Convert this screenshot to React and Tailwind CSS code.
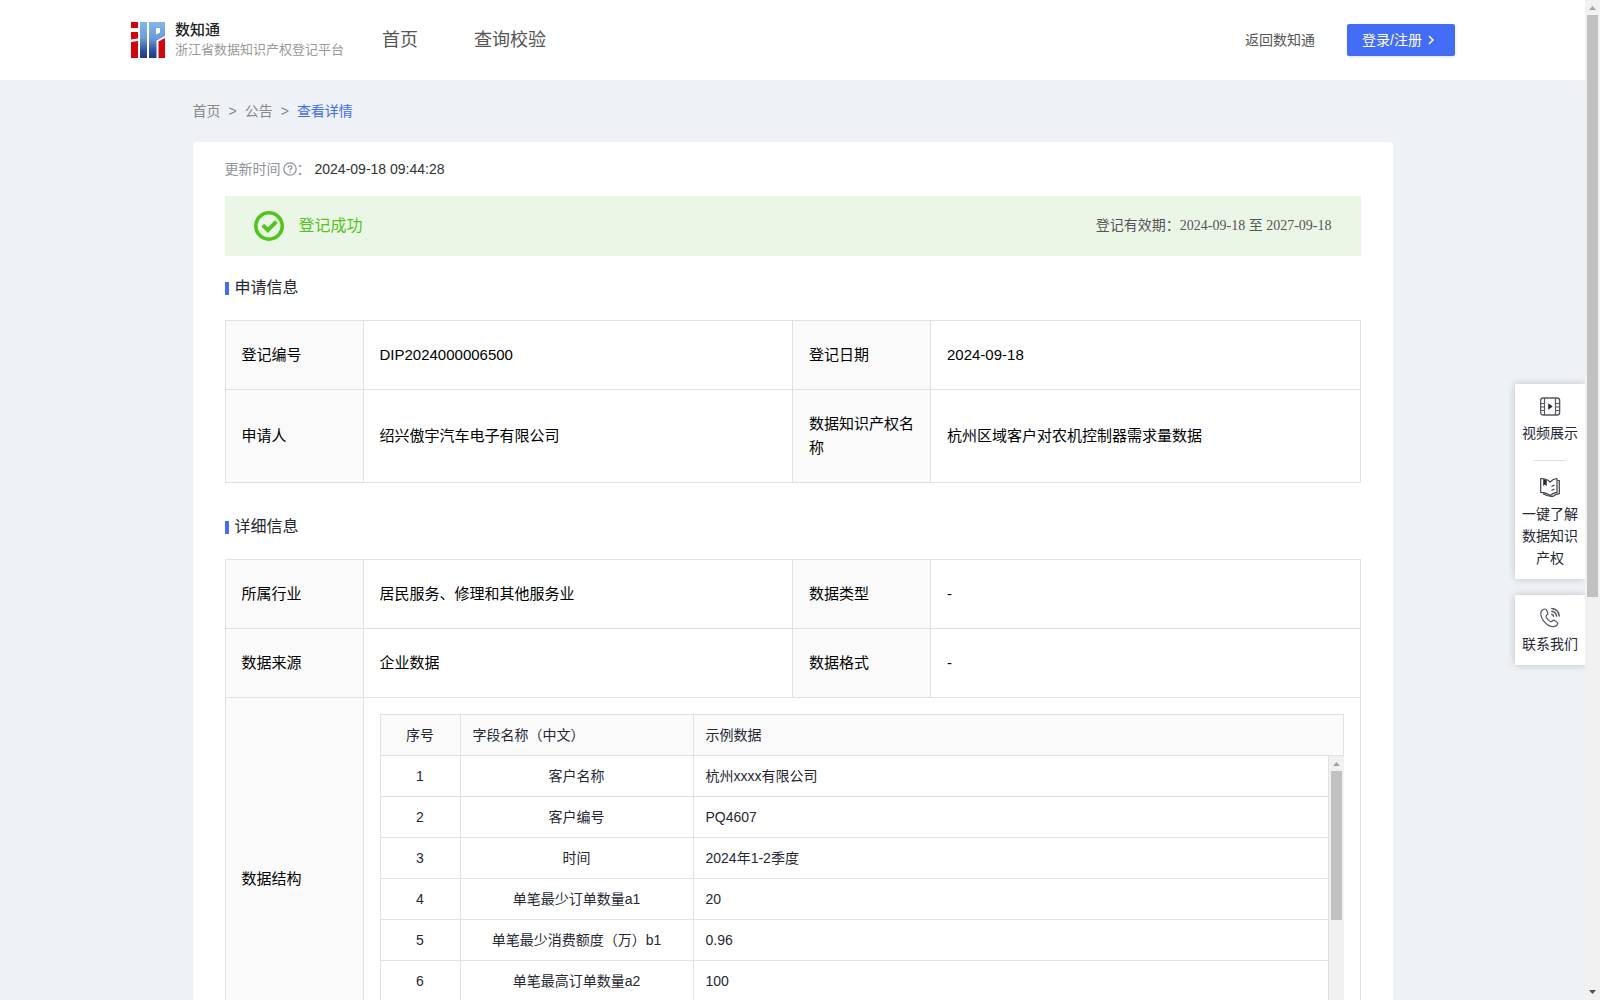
import React from "react";

const LINE = "border-[#e1e1e1]";

function Logo() {
  return (
    <svg width="34" height="36" viewBox="0 0 34 36" aria-hidden="true">
      <defs>
        <linearGradient id="blue" x1="0" y1="0" x2="0" y2="36" gradientUnits="userSpaceOnUse">
          <stop offset="0" stopColor="#84b6ea" />
          <stop offset="0.45" stopColor="#6d9ad8" />
          <stop offset="0.8" stopColor="#30509f" />
          <stop offset="1" stopColor="#27357f" />
        </linearGradient>
      </defs>
      <path fill="#d0070f" d="M0 0h7v6H0zM0 10h7v6.500l-7 1zM0 20l7-1v17H0z" />
      <path fill="url(#blue)" d="M9 0h7v36H9z" />
      <path fill="url(#blue)" fillRule="evenodd" d="M18 0h16v14l-8.500 4.500V36H18zM25 6v6.500l4-2V6z" />
      <path fill="#d0070f" d="M27.500 19.500l6.500-3.500v20h-6.500z" />
    </svg>
  );
}

function QuestionIcon() {
  return (
    <svg width="14" height="14" viewBox="0 0 14 14" fill="none" stroke="#8f9298" strokeWidth="1.300" aria-hidden="true">
      <circle cx="7" cy="7" r="6.200" />
      <path d="M5.200 5.600c0-2.500 3.700-2.300 3.700-.2C8.900 6.800 7 6.700 7 8.400M7 9.600v1.200" />
    </svg>
  );
}

function SuccessIcon() {
  return (
    <svg width="30" height="30" viewBox="0 0 30 30" fill="none" stroke="#52c41a" aria-hidden="true">
      <circle cx="15" cy="15" r="13.200" strokeWidth="3.600" />
      <path d="M8.800 14.200l5 5 8.500-8.500" strokeWidth="4" />
    </svg>
  );
}

function VideoIcon() {
  return (
    <svg width="21" height="21" viewBox="0 0 21 21" fill="none" stroke="#55585f" strokeWidth="1.200" aria-hidden="true">
      <rect x="0.600" y="2" width="19" height="17" rx="2.500" strokeWidth="1.400" />
      <path d="M4.500 2v17M15.500 2v17M1 7.500h3.500M1 11h3.500M1 14.500h3.500M15.500 7.500H19M15.500 11H19M15.500 14.500H19" />
      <path d="M8.200 7.200v6.600l4.500-3.300z" fill="#23262e" stroke="none" />
    </svg>
  );
}

function BookIcon() {
  return (
    <svg width="21" height="21" viewBox="0 0 21 21" fill="none" stroke="#3c3f47" strokeWidth="1.200" strokeLinejoin="round" aria-hidden="true">
      <path d="M0.700 1.500c4.300 0 7.300 1.200 9.300 3.500 2-2 4-3.300 7-3.500v13.800c-3 .2-5 1.400-7 3.200-2-1.800-5-3-9.300-3.200z" />
      <path d="M17.500 3.500h1.800v13.200c-3 .2-4.300.8-5.800 2.400-3 .9-6.500-.2-10.500-2.400" />
      <path d="M11.500 9.500l3-1.500M11.500 13.500l3-1.500" />
      <path d="M3.200 2v7l1.800-1.500 1.700 1.800V3z" fill="#23262e" stroke="none" />
    </svg>
  );
}

function PhoneIcon() {
  return (
    <svg width="21" height="21" viewBox="0 0 21 21" fill="none" stroke="#55585f" strokeWidth="1.200" strokeLinejoin="round" strokeLinecap="round" aria-hidden="true">
      <path d="M5.300 2C3 2 .8 3.800.8 6.200c0 6.500 6.700 13.500 12.300 13.500 2.400 0 4.300-1.200 4.700-3.500.1-.8-3.500-3-4.300-3-.9 0-1.700 1.700-2.600 1.500-1.900-.6-4.800-3.700-5-5.500 0-.9 2-1.500 2-2.500C7.900 5.700 6.400 2 5.300 2z" />
      <path d="M11.800 7.300c.9.300 1.500.9 1.700 1.900M11.800 4.300c2.600.4 4.400 2.200 4.800 4.800M11.800 1.400c4.300.4 7 3.300 7.400 7.600" strokeWidth="1.500" />
    </svg>
  );
}

function ScrollBar({ thumb, down }) {
  return (
    <div className="flex w-[15px] shrink-0 flex-col items-center bg-[#f1f1f1]" aria-hidden="true">
      <svg className="shrink-0" width="15" height="15" viewBox="0 0 15 15">
        <path d="M4 10h7L7.500 6z" fill="#a3a3a3" />
      </svg>
      <div className="min-h-0 w-full flex-1 px-0.5">
        <div className={`${thumb} w-[11px] bg-[#c1c1c1]`} />
      </div>
      {down && (
        <svg className="shrink-0" width="15" height="15" viewBox="0 0 15 15">
          <path d="M4 5h7L7.500 9z" fill="#505050" />
        </svg>
      )}
    </div>
  );
}

function Header() {
  return (
    <header className="flex h-20 shrink-0 items-center bg-white pr-[130px] pl-[131px] text-[#555]">
      <a href="#home" className="flex items-center gap-[10px]">
        <Logo />
        <span className="flex flex-col">
          <span className="text-[15px] leading-5 font-medium text-[#222]">数知通</span>
          <span className="text-[13px] leading-5 text-[#999]">浙江省数据知识产权登记平台</span>
        </span>
      </a>
      <nav className="ml-[38px] flex gap-14 text-[18px] leading-6">
        <a href="#index">首页</a>
        <a href="#query">查询校验</a>
      </nav>
      <div className="ml-auto flex items-center gap-8 text-sm">
        <a href="#back">返回数知通</a>
        <button type="button" className="flex h-8 items-center gap-[3px] rounded-xs bg-[#446df5] pr-[18px] pl-[15px] whitespace-nowrap text-white shadow-sm">
          登录/注册
          <svg width="12" height="12" viewBox="0 0 12 12" fill="none" stroke="currentColor" strokeWidth="1.500" aria-hidden="true">
            <path d="M4 2l4 4-4 4" />
          </svg>
        </button>
      </div>
    </header>
  );
}

function SectionTitle({ children }) {
  return (
    <h2 className="flex items-center gap-1.5 text-base leading-6 text-[#252733]">
      <span className="h-[13px] w-1 bg-[#446df5]" />
      {children}
    </h2>
  );
}

function InfoTable({ rows, children }) {
  return (
    <table className={`mt-5 w-full table-fixed border-separate border-spacing-0 border-t border-l ${LINE} text-[15px] leading-6 text-black`}>
      <colgroup>
        <col className="w-[138px]" />
        <col />
        <col className="w-[138px]" />
        <col />
      </colgroup>
      <tbody>
        {rows.map((row) => (
          <tr key={row[0]}>
            {row.map((text, i) =>
              i % 2 === 0 ? (
                <th key={i} scope="row" className={`border-r border-b ${LINE} bg-[#fafafa] px-4 py-[22px] text-left font-normal`}>{text}</th>
              ) : (
                <td key={i} className={`border-r border-b ${LINE} px-4 py-[22px]`}>{text}</td>
              )
            )}
          </tr>
        ))}
        {children}
      </tbody>
    </table>
  );
}

const fields = [
  ["客户名称", "杭州xxxx有限公司"],
  ["客户编号", "PQ4607"],
  ["时间", "2024年1-2季度"],
  ["单笔最少订单数量a1", "20"],
  ["单笔最少消费额度（万）b1", "0.96"],
  ["单笔最高订单数量a2", "100"],
];

function FieldCols() {
  return (
    <colgroup>
      <col className="w-20" />
      <col className="w-[233px]" />
      <col />
    </colgroup>
  );
}

function FieldTable() {
  const cell = `h-[41px] border-r border-b ${LINE} px-3`;
  return (
    <div className="text-sm leading-5 text-[#252733]">
      <table className={`w-full table-fixed border-separate border-spacing-0 border-t border-l ${LINE} bg-[#fafafa]`}>
        <FieldCols />
        <thead>
          <tr className="text-left">
            <th scope="col" className={`${cell} text-center font-normal`}>序号</th>
            <th scope="col" className={`${cell} font-normal`}>字段名称（中文）</th>
            <th scope="col" className={`${cell} font-normal`}>示例数据</th>
          </tr>
        </thead>
      </table>
      <div className={`flex h-72 overflow-hidden border-l ${LINE}`}>
        <div className="min-w-0 flex-1">
          <table className="w-full table-fixed border-separate border-spacing-0" aria-label="示例数据">
            <FieldCols />
            <tbody>
              {fields.map(([name, sample], i) => (
                <tr key={name}>
                  <td className={`${cell} text-center`}>{i + 1}</td>
                  <td className={`${cell} text-center`}>{name}</td>
                  <td className={cell}>{sample}</td>
                </tr>
              ))}
            </tbody>
          </table>
        </div>
        <ScrollBar thumb="h-[149px]" />
      </div>
    </div>
  );
}

function SideLink({ href, icon, children }) {
  return (
    <a href={href} className="flex flex-col items-center gap-[5px] px-[7px] text-center">
      {icon}
      <span>{children}</span>
    </a>
  );
}

function SidePanel() {
  const card = "flex flex-col items-center bg-white pt-3 pb-2.5 shadow-[0_0_8px_rgba(0,0,0,0.2)]";
  return (
    <aside className="absolute top-96 right-0 flex w-[70px] flex-col gap-4 text-sm leading-[22px] text-[#252733]">
      <div className={card}>
        <SideLink href="#video" icon={<VideoIcon />}>视频展示</SideLink>
        <hr className="my-4 w-8 border-[#dcdfe6]" />
        <SideLink href="#guide" icon={<BookIcon />}>一键了解数据知识产权</SideLink>
      </div>
      <div className={card}>
        <SideLink href="#contact" icon={<PhoneIcon />}>联系我们</SideLink>
      </div>
    </aside>
  );
}

export default function App() {
  return (
    <div className="flex h-screen overflow-hidden bg-[#eef2f6] font-['Liberation_Sans','Noto_Sans_CJK_SC',sans-serif]">
      <div className="relative flex min-w-0 flex-1 flex-col overflow-hidden">
        <Header />
        <main className="mx-auto w-full max-w-[1200px]">
          <nav className="flex h-[62px] items-center gap-2 text-sm text-[#888]" aria-label="面包屑">
            <a href="#index">首页</a>
            <span>&gt;</span>
            <a href="#notice">公告</a>
            <span>&gt;</span>
            <a href="#detail" className="text-[#3c6cf6]">查看详情</a>
          </nav>
          <div className="rounded-t bg-white px-8 pt-4 pb-8">
            <p className="flex items-center text-sm leading-[22px] text-[#909399]">
              更新时间
              <span className="ml-0.5"><QuestionIcon /></span>
              ：<time className="ml-1 text-[#303133]">2024-09-18 09:44:28</time>
            </p>
            <div className="mt-4 mb-5 flex h-[60px] items-center gap-[15px] bg-[#ebf7e6] px-[29px]">
              <SuccessIcon />
              <strong className="text-base font-normal text-[#52c41a]">登记成功</strong>
              <p className="ml-auto font-['Liberation_Serif','Noto_Sans_CJK_SC',serif] text-sm text-[#555]">
                登记有效期：2024-09-18 至 2027-09-18
              </p>
            </div>
            <SectionTitle>申请信息</SectionTitle>
            <InfoTable
              rows={[
                ["登记编号", "DIP2024000006500", "登记日期", "2024-09-18"],
                ["申请人", "绍兴傲宇汽车电子有限公司", "数据知识产权名称", "杭州区域客户对农机控制器需求量数据"],
              ]}
            />
            <div className="h-8" />
            <SectionTitle>详细信息</SectionTitle>
            <InfoTable
              rows={[
                ["所属行业", "居民服务、修理和其他服务业", "数据类型", "-"],
                ["数据来源", "企业数据", "数据格式", "-"],
              ]}
            >
              <tr>
                <th scope="row" className={`border-r border-b ${LINE} bg-[#fafafa] px-4 text-left font-normal`}>数据结构</th>
                <td colSpan={3} className={`border-r border-b ${LINE} p-4`}>
                  <FieldTable />
                </td>
              </tr>
            </InfoTable>
          </div>
        </main>
        <SidePanel />
      </div>
      <ScrollBar thumb="h-3/5" down />
    </div>
  );
}
